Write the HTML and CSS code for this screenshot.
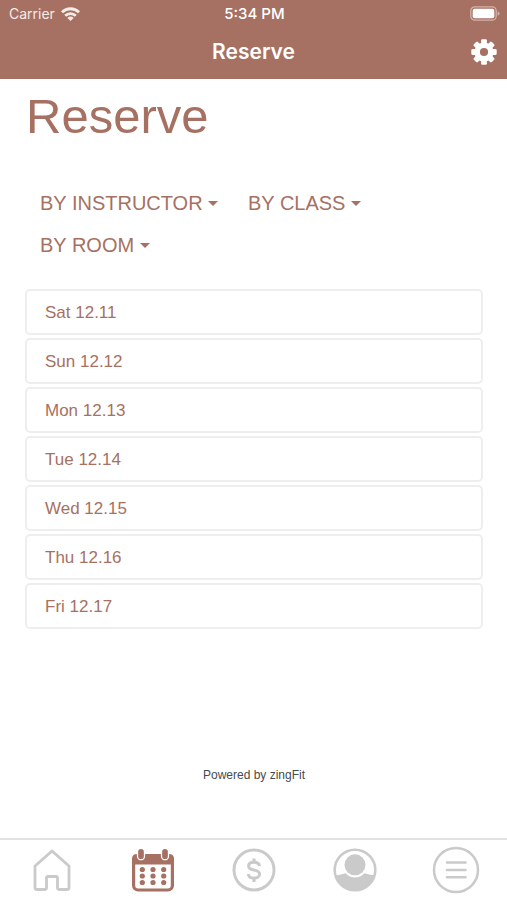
FILE: index.html
```html
<!DOCTYPE html>
<html lang="en">
<head>
<meta charset="utf-8">
<meta name="viewport" content="width=device-width, initial-scale=1">
<title>Reserve</title>
<link rel="stylesheet" href="styles.css">
</head>
<body>
<header class="top">
  <div class="status">
    <div class="carrier">
      <span>Carrier</span>
      <svg width="19" height="14" viewBox="0 0 19 14" aria-hidden="true">
        <g fill="none" stroke="currentColor" stroke-width="2.8">
          <path d="M1 5.200a12.200 12.200 0 0 1 17 0"/>
          <path d="M4.200 8.700a7.600 7.600 0 0 1 10.600 0"/>
        </g>
        <path fill="currentColor" d="M6.400 11a4.600 4.600 0 0 1 6.200 0L9.500 14z"/>
      </svg>
    </div>
    <span class="time">5:34 PM</span>
    <svg class="battery" width="30" height="15" viewBox="0 0 30 15" aria-hidden="true">
      <rect x=".8" y=".8" width="25.4" height="13.4" rx="4" fill="none" stroke="#d3b3a9" stroke-width="1.3"/>
      <rect x="2.7" y="2.7" width="21.6" height="9.6" rx="2" fill="#fff"/>
      <path d="M27.6 5.2q2 .8 2 2.3t-2 2.3z" fill="#d3b3a9"/>
    </svg>
  </div>
  <div class="titlebar">
    <span class="title">Reserve</span>
    <button class="settings" type="button" aria-label="Settings">
      <svg width="26" height="26" viewBox="-13 -13 26 26" aria-hidden="true">
        <g fill="currentColor">
          <rect x="-2.9" y="-12.7" width="5.8" height="25.4" rx="1.3"/>
          <rect x="-2.9" y="-12.7" width="5.8" height="25.4" rx="1.3" transform="rotate(45)"/>
          <rect x="-2.9" y="-12.7" width="5.8" height="25.4" rx="1.3" transform="rotate(90)"/>
          <rect x="-2.9" y="-12.7" width="5.8" height="25.4" rx="1.3" transform="rotate(135)"/>
          <circle r="9.6"/>
        </g>
        <circle r="4.1" fill="#a67162"/>
      </svg>
    </button>
  </div>
</header>

<main class="content">
  <h1>Reserve</h1>
  <form class="filters">
    <label class="filter">
      <select aria-label="Instructor"><option>BY INSTRUCTOR</option></select>
      <svg width="10" height="5" viewBox="0 0 10 5" aria-hidden="true"><path d="M0 0h10L5 5z" fill="currentColor"/></svg>
    </label>
    <label class="filter">
      <select aria-label="Class"><option>BY CLASS</option></select>
      <svg width="10" height="5" viewBox="0 0 10 5" aria-hidden="true"><path d="M0 0h10L5 5z" fill="currentColor"/></svg>
    </label>
    <label class="filter">
      <select aria-label="Room"><option>BY ROOM</option></select>
      <svg width="10" height="5" viewBox="0 0 10 5" aria-hidden="true"><path d="M0 0h10L5 5z" fill="currentColor"/></svg>
    </label>
  </form>
  <ul class="days">
    <li><a href="#sat">Sat 12.11</a></li>
    <li><a href="#sun">Sun 12.12</a></li>
    <li><a href="#mon">Mon 12.13</a></li>
    <li><a href="#tue">Tue 12.14</a></li>
    <li><a href="#wed">Wed 12.15</a></li>
    <li><a href="#thu">Thu 12.16</a></li>
    <li><a href="#fri">Fri 12.17</a></li>
  </ul>
  <p class="powered">Powered by zingFit</p>
</main>

<nav class="tabs" aria-label="Main">
  <a href="#home" aria-label="Home">
    <svg width="48" height="48" viewBox="0 0 48 48" aria-hidden="true">
      <path d="M24 5 41 20v21.500q0 2-2 2h-7.500q-2 0-2-2V32q0-1.500-1.500-1.500h-8q-1.500 0-1.500 1.500v9.500q0 2-2 2H9q-2 0-2-2V20z" fill="none" stroke="currentColor" stroke-width="2.800" stroke-linejoin="round"/>
    </svg>
  </a>
  <a class="active" href="#reserve" aria-label="Reserve" aria-current="page">
    <svg width="48" height="48" viewBox="0 0 48 48" aria-hidden="true">
      <rect x="4.600" y="10" width="38.800" height="34" rx="4.500" fill="#fff" stroke="currentColor" stroke-width="3.200"/>
      <path d="M3 18.500V13q0-5 5-5h32q5 0 5 5v5.500z" fill="currentColor"/>
      <g fill="currentColor" stroke="#fff" stroke-width="1.300">
        <rect x="8.500" y="2.300" width="7" height="11.400" rx="3.500"/>
        <rect x="32.500" y="2.300" width="7" height="11.400" rx="3.500"/>
      </g>
      <g fill="currentColor">
        <circle cx="13.300" cy="23.500" r="2.600"/><circle cx="24" cy="23.500" r="2.600"/><circle cx="34.700" cy="23.500" r="2.600"/>
        <circle cx="13.300" cy="30" r="2.600"/><circle cx="24" cy="30" r="2.600"/><circle cx="34.700" cy="30" r="2.600"/>
        <circle cx="13.300" cy="36.500" r="2.600"/><circle cx="24" cy="36.500" r="2.600"/><circle cx="34.700" cy="36.500" r="2.600"/>
      </g>
    </svg>
  </a>
  <a href="#buy" aria-label="Buy">
    <svg width="48" height="48" viewBox="0 0 48 48" fill="none" stroke="currentColor" aria-hidden="true">
      <circle cx="24" cy="24" r="20" stroke-width="2.900"/>
      <path d="M29.400 20.300c0-2.400-2-4-5.400-4s-5.400 1.500-5.400 3.900c0 5.200 11 2.400 11 7.800 0 2.400-2.200 4.100-5.600 4.100s-5.600-1.600-5.600-4.200" stroke-width="3"/>
      <path d="M24 12.500v4M24 32v4" stroke-width="3.200"/>
    </svg>
  </a>
  <a href="#account" aria-label="Account">
    <svg width="48" height="48" viewBox="0 0 48 48" aria-hidden="true">
      <circle cx="24" cy="24" r="20.300" fill="none" stroke="currentColor" stroke-width="2.600"/>
      <circle cx="24" cy="18.800" r="10.500" fill="currentColor"/>
      <path d="M4 29.500q4.500-.300 10.500-2.200Q18.500 31.500 24 31.500t9.500-4.200q6 1.900 10.500 2.200C41 39 33.500 44.800 24 44.800S7 39 4 29.500z" fill="currentColor"/>
    </svg>
  </a>
  <a href="#more" aria-label="More">
    <svg width="48" height="48" viewBox="0 0 48 48" fill="none" stroke="currentColor" aria-hidden="true">
      <circle cx="24" cy="24" r="22" stroke-width="2.500"/>
      <path d="M15 16.500h18.500M15 24h18.500M15 31.300h18.500" stroke-width="2.600" stroke-linecap="round"/>
    </svg>
  </a>
</nav>
</body>
</html>
```

FILE: styles.css
```css
* {
  box-sizing: border-box;
}

body {
  margin: 0;
  min-height: 100vh;
  display: flex;
  flex-direction: column;
  background: #fff;
  color: #a67162;
  font-family: "Liberation Sans", Arial, sans-serif;
}

.top {
  background: #a67162;
  color: #fff;
  font-family: Inter, sans-serif;
  padding-bottom: 2px;
}

.status,
.titlebar {
  display: grid;
  grid-template-columns: 1fr auto 1fr;
  align-items: center;
}

.status {
  height: 27px;
  padding: 0 7px 0 9px;
  font-size: 14px;
}

.carrier {
  display: flex;
  align-items: center;
  gap: 6px;
  color: #f7ebe6;
}

.time {
  font-size: 15px;
  font-weight: 500;
}

.battery {
  justify-self: end;
}

.titlebar {
  height: 50px;
  padding: 0 10px;
}

.title {
  grid-column: 2;
  font-size: 21px;
  font-weight: 600;
  line-height: 24px;
}

.settings {
  justify-self: end;
  display: flex;
  padding: 0;
  border: 0;
  background: none;
  color: #fff;
}

.content {
  flex: 1;
  display: flex;
  flex-direction: column;
  padding: 8px 24px 0 25px;
}

h1 {
  margin: 0 0 37px;
  padding-left: 1px;
  font-size: 49px;
  font-weight: 400;
  line-height: 58px;
}

.filters {
  display: flex;
  flex-wrap: wrap;
  column-gap: 30px;
  padding: 0 15px;
}

.filter {
  display: flex;
  align-items: center;
  gap: 5px;
  height: 42px;
}

.filter select {
  appearance: none;
  padding: 0;
  border: 0;
  background: none;
  color: inherit;
  font: 20px "Liberation Sans", Arial, sans-serif;
}

.days {
  display: grid;
  gap: 3px;
  margin: 23px 0 0;
  padding: 0;
  list-style: none;
}

.days a {
  display: block;
  padding: 12px 18px 10px;
  border: 2px solid #eee;
  border-radius: 5px;
  color: inherit;
  font-size: 17px;
  line-height: 20px;
  text-decoration: none;
}

.powered {
  margin: auto 0 55px;
  color: #444b50;
  font-size: 12px;
  line-height: 16px;
  text-align: center;
}

.tabs {
  display: grid;
  grid-template-columns: repeat(5, 1fr);
  border-top: 2px solid #e2e2e2;
  padding: 6px 0 6px 1px;
}

.tabs a {
  display: flex;
  justify-content: center;
  color: #cacaca;
}

.tabs .active {
  color: #a67162;
}
```
